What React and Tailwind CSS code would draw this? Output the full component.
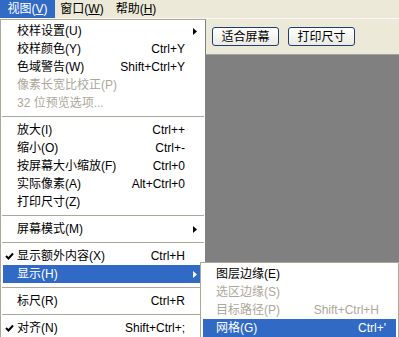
import React from "react";

const font = { fontFamily: '"Liberation Sans", "Noto Sans CJK SC", sans-serif' };

/* ---------- Menu Data ---------- */
const viewItems = [
  { label: "校样设置(U)", arrow: true },
  { label: "校样颜色(Y)", sc: "Ctrl+Y" },
  { label: "色域警告(W)", sc: "Shift+Ctrl+Y" },
  { label: "像素长宽比校正(P)", disabled: true },
  { label: "32 位预览选项...", disabled: true },
  { sep: true },
  { label: "放大(I)", sc: "Ctrl++" },
  { label: "缩小(O)", sc: "Ctrl+-" },
  { label: "按屏幕大小缩放(F)", sc: "Ctrl+0" },
  { label: "实际像素(A)", sc: "Alt+Ctrl+0" },
  { label: "打印尺寸(Z)" },
  { sep: true },
  { label: "屏幕模式(M)", arrow: true },
  { sep: true },
  { label: "显示额外内容(X)", sc: "Ctrl+H", check: true },
  { label: "显示(H)", arrow: true, active: true },
  { sep: true },
  { label: "标尺(R)", sc: "Ctrl+R" },
  { sep: true },
  { label: "对齐(N)", sc: "Shift+Ctrl+;", check: true },
];

const showItems = [
  { label: "图层边缘(E)" },
  { label: "选区边缘(S)", disabled: true },
  { label: "目标路径(P)", sc: "Shift+Ctrl+H", disabled: true },
  { label: "网格(G)", sc: "Ctrl+'", active: true, pr: 10 },
];

const Check = ({ white }) => (
  <svg width="9" height="9" viewBox="0 0 9 9" className="absolute left-[2px] top-[5px]">
    <path
      d="M1 4 L3.5 6.5 L8 1.5"
      fill="none"
      stroke={white ? "#fff" : "#000"}
      strokeWidth="2"
    />
  </svg>
);

const Arrow = ({ white }) => (
  <svg width="4" height="7" viewBox="0 0 4 7" className="absolute right-[6px] top-[6px]">
    <path d="M0 0 L4 3.5 L0 7 Z" fill={white ? "#fff" : "#000"} />
  </svg>
);

const MenuRow = ({ item, pl, pr }) => {
  if (item.sep) {
    return (
      <div className="h-[9px] flex items-center px-[1px]">
        <div className="h-[1px] w-full bg-[#ACA899]" />
      </div>
    );
  }
  const color = item.active
    ? "text-white bg-[#316AC5]"
    : item.disabled
    ? "text-[#ACA899]"
    : "text-black";
  return (
    <div
      className={`relative mx-[2px] h-[18px] flex items-center justify-between text-[12px] leading-none whitespace-nowrap ${color}`}
      style={{ paddingLeft: pl, paddingRight: item.pr ?? pr }}
    >
      {item.check && <Check white={item.active} />}
      <span>{item.label}</span>
      {item.sc && <span>{item.sc}</span>}
      {item.arrow && <Arrow white={item.active} />}
    </div>
  );
};

const XpButton = ({ children }) => (
  <button className="h-[19px] w-[67px] rounded-[3px] border border-[#1C3F6E] bg-gradient-to-b from-white to-[#EBEAE3] text-[12px] leading-none text-black">
    {children}
  </button>
);

export default function App() {
  return (
    <div
      className="relative w-[399px] h-[337px] overflow-hidden bg-[#ECE9D8] flex flex-col"
      style={font}
    >
      {/* ---------- Menu Bar ---------- */}
      <div className="h-[18px] flex items-stretch text-[12px] leading-none">
        <div className="w-[55px] flex items-center justify-center bg-[#316AC5] text-white">
          视图(<span className="underline">V</span>)
        </div>
        <div className="w-[54px] flex items-center justify-center">
          窗口(<span className="underline">W</span>)
        </div>
        <div className="w-[54px] flex items-center justify-center">
          帮助(<span className="underline">H</span>)
        </div>
      </div>

      {/* ---------- Options Bar ---------- */}
      <div className="h-[36px] flex items-center gap-[9px] pl-[212px] border-t border-[#F8F7F2]">
        <XpButton>适合屏幕</XpButton>
        <XpButton>打印尺寸</XpButton>
      </div>

      {/* ---------- Canvas ---------- */}
      <div className="flex-1 bg-[#808080] border-t border-[#A7A59A]" />

      {/* ---------- View Menu ---------- */}
      <div className="absolute left-0 top-[19px] w-[206px] bg-white border border-[#ACA899] border-r-[#808080] py-[2px]">
        {viewItems.map((item, i) => (
          <MenuRow key={i} item={item} pl={14} pr={18} />
        ))}
      </div>

      {/* ---------- Show Submenu ---------- */}
      <div className="absolute left-[200px] top-[262px] w-[199px] bg-white border border-[#ACA899] py-[2px]">
        {showItems.map((item, i) => (
          <MenuRow key={i} item={item} pl={13} pr={17} />
        ))}
      </div>
    </div>
  );
}
